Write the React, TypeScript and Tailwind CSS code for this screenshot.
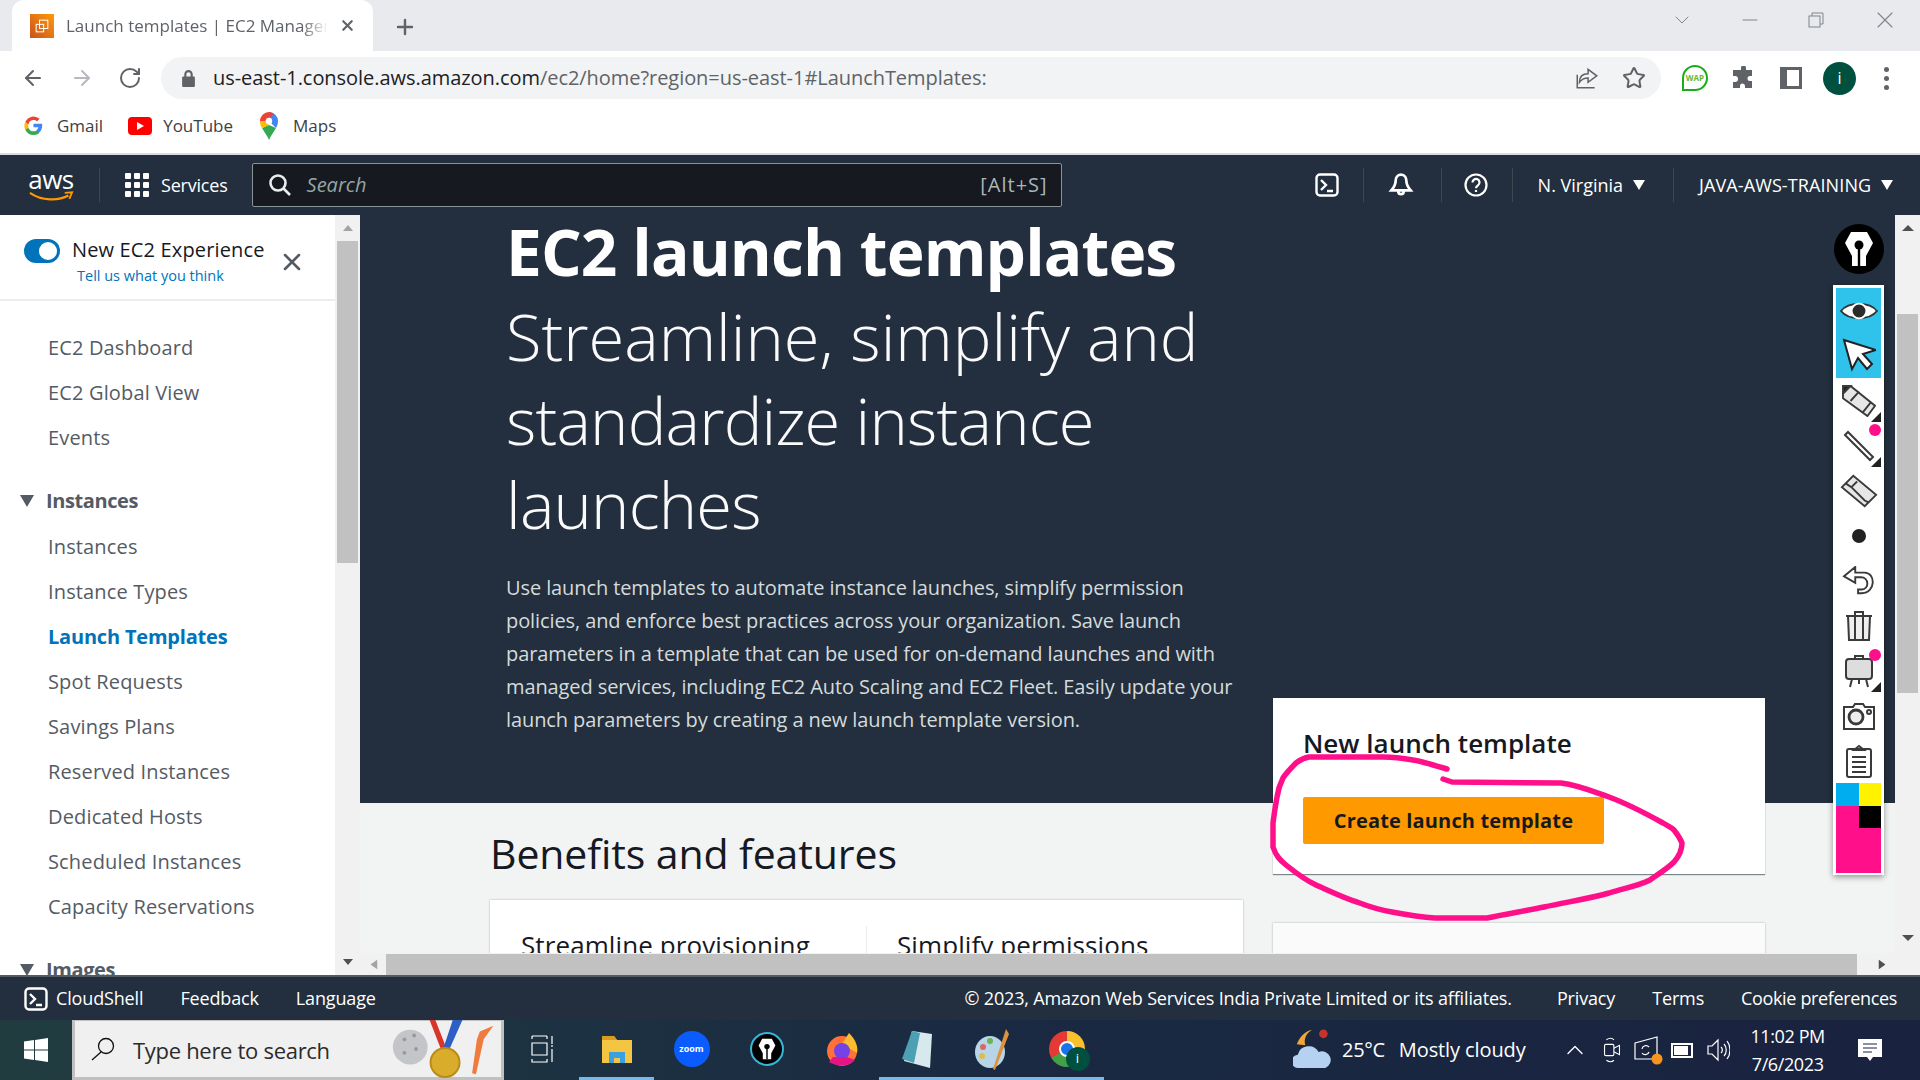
import {
  ArrowLeft,
  ArrowRight,
  ChevronDown,
  ChevronUp,
  Minus,
  Plus,
  RotateCw,
  Star,
  X,
} from "lucide-react";

const emberFont = "font-['Open_Sans',sans-serif]";

const navGroups = [
  { items: ["EC2 Dashboard", "EC2 Global View", "Events"] },
  {
    title: "Instances",
    items: [
      "Instances",
      "Instance Types",
      "Launch Templates",
      "Spot Requests",
      "Savings Plans",
      "Reserved Instances",
      "Dedicated Hosts",
      "Scheduled Instances",
      "Capacity Reservations",
    ],
  },
  { title: "Images", items: [] },
];

const inkPath =
  "M1447 769 C1430 764 1420 761 1413 760 C1402 758 1392 757 1383 757 L1309 757 C1303 758 1300 760 1296 763 C1290 769 1286 773 1283 778 C1279 786 1278 790 1277 797 C1275 808 1274 815 1273 823 L1273 847 C1276 856 1280 860 1286 865 C1296 873 1305 880 1316 885 C1332 892 1344 898 1357 902 C1370 907 1380 910 1392 912 C1408 915 1420 917 1435 918 L1487 918 C1506 914 1525 911 1544 907 C1566 902 1588 899 1609 893 C1625 888 1638 886 1650 880 C1660 873 1668 868 1674 862 C1680 855 1682 849 1682 843 C1680 838 1678 835 1674 830 C1671 827 1668 826 1663 823 C1645 813 1628 804 1609 797 C1592 791 1578 785 1561 783 L1452 782 L1443 779";

function Tri({ className }: { className: string }) {
  return (
    <svg viewBox="0 0 12 10" className={className} fill="currentColor" preserveAspectRatio="none">
      <path d="M0 0h12L6 10z" />
    </svg>
  );
}

function NibIcon({ className }: { className: string }) {
  return (
    <svg viewBox="0 0 30 36" className={className}>
      <path fill="white" d="M7 1h16l6 11-7 13v10H8V25L1 12z" />
      <circle cx="15" cy="14" r="4.500" fill="black" />
      <rect x="13.800" y="14" width="2.400" height="21" fill="black" />
    </svg>
  );
}

function TabBar() {
  return (
    <div className="flex h-[51px] items-end bg-[#e8eaed] pl-3 text-[#5f6368]">
      <div className="flex h-[51px] w-[361px] items-center rounded-t-xl bg-white pl-[18px]">
        <div className="flex h-6 w-6 shrink-0 items-center justify-center bg-gradient-to-tr from-[#c8511b] to-[#ff9900]">
          <svg viewBox="0 0 24 24" className="h-5 w-5" fill="none" stroke="white" strokeWidth="1.2">
            <rect x="9" y="5" width="10" height="10" />
            <rect x="5" y="10" width="9" height="9" />
          </svg>
        </div>
        <span className="ml-3 w-[262px] overflow-hidden whitespace-nowrap text-[17px] text-[#5f6368] [mask-image:linear-gradient(to_right,black_90%,transparent)]">
          Launch templates | EC2 Management Console
        </span>
        <X className="ml-[11px] h-[17px] w-[17px] text-[#5f6368]" strokeWidth={3} />
      </div>
      <Plus className="mb-3 ml-[20px] h-[24px] w-[24px] text-[#5f6368]" strokeWidth={2.4} />
      <div className="mb-[17px] ml-auto flex items-center text-[#80868b]">
        <ChevronDown className="h-6 w-6" strokeWidth={1} />
        <Minus className="ml-11 h-6 w-6" strokeWidth={1} />
        <svg viewBox="0 0 16 16" className="ml-[46px] h-4 w-4" fill="none" stroke="currentColor">
          <rect x="1" y="4" width="11" height="11" />
          <path d="M4 4V1h11v11h-3" />
        </svg>
        <X className="ml-[47px] mr-[21px] h-7 w-7" strokeWidth={1} />
      </div>
    </div>
  );
}

function Toolbar() {
  return (
    <div className="flex h-[51px] items-center bg-white pl-[21px] pt-[3px] text-[#5f6368]">
      <ArrowLeft className="h-6 w-6" strokeWidth={2} />
      <ArrowRight className="ml-[25px] h-6 w-6 text-[#b6b9bd]" strokeWidth={2} />
      <RotateCw className="ml-6 h-6 w-6" strokeWidth={2} />
      <div className="ml-[19px] flex h-[42px] w-[1500px] items-center rounded-full bg-[#f1f3f4] pl-[21px]">
        <svg viewBox="0 0 12 16" className="h-[17px] w-[13px]" fill="#5f6368">
          <path d="M1 6h1V4a4 4 0 0 1 8 0v2h1a1 1 0 0 1 1 1v8a1 1 0 0 1-1 1H1a1 1 0 0 1-1-1V7a1 1 0 0 1 1-1zm3 0h4V4a2 2 0 0 0-4 0z" />
        </svg>
        <span className="ml-[18px] text-[20px] tracking-[-0.05px] text-[#202124]">
          us-east-1.console.aws.amazon.com<span className="text-[#5f6368]">/ec2/home?region=us-east-1#LaunchTemplates:</span>
        </span>
        <svg viewBox="0 0 24 24" className="ml-auto h-[26px] w-[26px]" fill="none" stroke="#5f6368" strokeWidth="1.4">
          <path d="M3 9v12h16M13 4l8 6-8 6v-4c-4 0-6 1-8 4 0-5 3-8 8-8z" />
        </svg>
        <Star className="ml-[22px] mr-[15px] h-6 w-6 text-[#5f6368]" strokeWidth={2} />
      </div>
      <div className="ml-[21px] flex h-[26px] w-[26px] items-center justify-center rounded-full rounded-bl-[3px] border-2 border-[#1aad19] text-[8px] font-bold text-[#6cb52d]">
        WAP
      </div>
      <svg viewBox="0 0 24 24" className="ml-[23px] h-6 w-6" fill="#5f6368">
        <path d="M10 2a2.500 2.500 0 0 1 5 0v2h6v6h-2a2.500 2.500 0 0 0 0 5h2v7h-7v-2a2.500 2.500 0 0 0-5 0v2H2v-6h2a2.500 2.500 0 0 0 0-6H2V4h8z" />
      </svg>
      <div className="ml-[25px] flex h-[22px] w-[22px] justify-end bg-[#5f6368] p-[3px]">
        <div className="h-full w-[12px] bg-white" />
      </div>
      <div className="ml-[21px] flex h-[33px] w-[33px] items-center justify-center rounded-full bg-[#00503f] text-[16px] text-white">
        i
      </div>
      <div className="ml-[28px] flex flex-col gap-[4px]">
        <span className="h-[5px] w-[5px] rounded-full bg-[#5f6368]" />
        <span className="h-[5px] w-[5px] rounded-full bg-[#5f6368]" />
        <span className="h-[5px] w-[5px] rounded-full bg-[#5f6368]" />
      </div>
    </div>
  );
}

function Bookmarks() {
  return (
    <div className="flex h-[53px] items-center border-b-2 border-[#dadce0] bg-white pb-[4px] pl-6 text-[17px] text-[#3c4043]">
      <svg viewBox="0 0 24 24" className="h-[19px] w-[19px]">
        <path fill="#4285f4" d="M23 12c0-.8-.1-1.600-.2-2.300H12v4.400h6.200a5.300 5.300 0 0 1-2.300 3.500v2.900h3.700c2.200-2 3.400-5 3.400-8.500z" />
        <path fill="#34a853" d="M12 24c3.100 0 5.700-1 7.600-2.800l-3.700-2.900c-1 .7-2.400 1.100-3.900 1.100-3 0-5.500-2-6.400-4.700H1.800v3A11.500 11.500 0 0 0 12 24z" />
        <path fill="#fbbc05" d="M5.600 14.700a7 7 0 0 1 0-4.400v-3H1.800a11.500 11.500 0 0 0 0 10.400z" />
        <path fill="#ea4335" d="M12 5.200c1.700 0 3.200.6 4.400 1.700l3.300-3.300A11.500 11.500 0 0 0 1.800 7.300l3.800 3C6.500 7.200 9 5.200 12 5.200z" />
      </svg>
      <span className="ml-[14px]">Gmail</span>
      <div className="ml-[25px] flex h-[18px] w-6 items-center justify-center rounded bg-[#ff0000]">
        <svg viewBox="0 0 10 10" className="h-[10px] w-[10px]" fill="white">
          <path d="M2 1l7 4-7 4z" />
        </svg>
      </div>
      <span className="ml-[11px]">YouTube</span>
      <svg viewBox="0 0 18 28" className="ml-[27px] h-[28px] w-[18px]">
        <path fill="#34a853" d="M9 28C7 23 4 20 2 16l7-3 7 3c-2 4-5 7-7 12z" />
        <path fill="#fbbc05" d="M2 16C.7 14 0 12 0 9l5-1 4 5z" />
        <path fill="#4285f4" d="M9 0a9 9 0 0 1 9 9c0 3-1 5-2 7L9 9z" />
        <path fill="#ea4335" d="M0 9a9 9 0 0 1 9-9c2 0 4 1 5 2L5 9z" />
        <circle cx="9" cy="9" r="3.200" fill="white" />
      </svg>
      <span className="ml-[15px]">Maps</span>
    </div>
  );
}

function ShellIcon({ className }: { className: string }) {
  return (
    <svg viewBox="0 0 24 24" className={className} fill="none" stroke="white" strokeWidth="2.400">
      <rect x="1.500" y="1.500" width="21" height="21" rx="3.500" />
      <path d="M6 7l5 5-5 5M12 18h6" />
    </svg>
  );
}

function Divider() {
  return <div className="h-[34px] w-px bg-[#414750]" />;
}

function TopNav() {
  return (
    <div className={`flex h-[60px] items-center bg-[#232f3e] text-white ${emberFont}`}>
      <div className="ml-[27px] flex w-[48px] flex-col items-center">
        <span className="h-[22px] text-[26px] leading-[20px] tracking-[-0.5px]">aws</span>
        <svg viewBox="0 0 48 12" className="h-[11px] w-[48px]" fill="none">
          <path d="M1 2c13 9 31 9 42 3" stroke="#ff9900" strokeWidth="2.400" />
          <path d="M39 2l8-.5-3 7" stroke="#ff9900" strokeWidth="2" />
        </svg>
      </div>
      <div className="ml-[24px] h-[34px] w-px bg-[#414750]" />
      <div className="ml-[25px] grid h-6 w-6 grid-cols-3 gap-[3px]">
        {Array.from({ length: 9 }).map((_, i) => (
          <span key={i} className="rounded-[1px] bg-white" />
        ))}
      </div>
      <span className="ml-3 text-[18px] tracking-[-0.2px]">Services</span>
      <div className="ml-[24px] flex h-[44px] w-[810px] items-center rounded-[2px] border border-[#879596] bg-[#16191f] pl-[15px] pr-[13px]">
        <svg viewBox="0 0 24 24" className="h-[24px] w-[24px]" fill="none" stroke="#eaeded" strokeWidth="2.600">
          <circle cx="10" cy="10" r="7.500" />
          <path d="M15.500 15.500L22 22" />
        </svg>
        <span className="ml-[15px] text-[20px] italic text-[#95a5a6]">Search</span>
        <span className="ml-auto text-[20px] tracking-[1px] text-[#aab7b8]">[Alt+S]</span>
      </div>
      <ShellIcon className="ml-[253px] h-[24px] w-[24px]" />
      <div className="ml-6">
        <Divider />
      </div>
      <svg viewBox="0 0 24 24" className="ml-[24px] h-[26px] w-[26px]" fill="none" stroke="white" strokeWidth="2.500">
        <path d="M12 2.500c-3.500 0-5 3-5 6 0 4-2.500 6.500-4 8.500h18c-1.500-2-4-4.500-4-8.500 0-3-1.500-6-5-6zM9.500 18a2.500 2.500 0 0 0 5 0" />
      </svg>
      <div className="ml-[27px]">
        <Divider />
      </div>
      <svg viewBox="0 0 24 24" className="ml-[22px] h-[24px] w-[24px]" fill="none" stroke="white" strokeWidth="2.200">
        <circle cx="12" cy="12" r="10.500" />
        <path d="M8.500 9.500a3.500 3.500 0 1 1 5.500 2.800c-1.300.9-2 1.500-2 3M12 17v2" />
      </svg>
      <div className="ml-6">
        <Divider />
      </div>
      <span className="ml-[25px] text-[18px]">N. Virginia</span>
      <Tri className="ml-[10px] h-[10px] w-[12px]" />
      <div className="ml-[28px]">
        <Divider />
      </div>
      <span className="ml-[25px] text-[18px] tracking-[0.1px]">JAVA-AWS-TRAINING</span>
      <Tri className="ml-[10px] h-[10px] w-[12px]" />
    </div>
  );
}

function Sidebar() {
  return (
    <div className={`flex w-[360px] shrink-0 bg-white ${emberFont}`}>
      <div className="w-[335px] overflow-hidden">
        <div className="flex h-[86px] border-b-2 border-[#eaeded] pl-6 pt-[23px]">
          <div className="mt-px flex h-6 w-9 items-center justify-end rounded-full bg-[#0073bb] pr-[3px]">
            <span className="h-[18px] w-[18px] rounded-full bg-white" />
          </div>
          <div className="ml-[12px] w-[197px]">
            <div className="whitespace-nowrap text-[20px] leading-6 tracking-[0.15px] text-[#16191f]">New EC2 Experience</div>
            <div className="ml-[5px] mt-[4px] text-[14.500px] leading-5 text-[#0073bb]">Tell us what you think</div>
          </div>
          <X className="ml-[9px] mt-[10px] h-7 w-7 text-[#545b64]" strokeWidth={2.2} />
        </div>
        <div className="pt-6">
          {navGroups.map((group, g) => (
            <div key={g} className={g > 0 ? "mt-[18px]" : ""}>
              {group.title && (
                <div className="flex h-[46px] items-center pl-5 text-[20px] font-bold tracking-[-0.4px] text-[#545b64]">
                  <Tri className="mr-[12px] h-3 w-[14px] text-[#545b64]" />
                  {group.title}
                </div>
              )}
              {group.items.map((item) => (
                <div
                  key={item}
                  className={`flex h-[45px] items-center pl-12 text-[20px] ${
                    item === "Launch Templates" ? "font-bold tracking-[-0.2px] text-[#0073bb]" : "tracking-[0.15px] text-[#545b64]"
                  }`}
                >
                  {item}
                </div>
              ))}
            </div>
          ))}
        </div>
      </div>
      <div className="flex w-[25px] flex-col items-center bg-[#f1f1f1] pt-[10px]">
        <Tri className="h-[6px] w-[10px] rotate-180 text-[#a3a3a3]" />
        <div className="mt-[10px] h-[322px] w-[21px] bg-[#c1c1c1]" />
        <Tri className="mt-auto mb-[10px] h-[6px] w-[10px] text-[#505050]" />
      </div>
    </div>
  );
}

function Hero() {
  return (
    <div className={`flex h-[588px] shrink-0 flex-col bg-[#232f3e] pl-[146px] text-white ${emberFont}`}>
      <h1 className="-mt-[5px] text-[64px] font-bold leading-[84px] tracking-[-0.9px]">EC2 launch templates</h1>
      <p className="text-[65px] font-light leading-[84px] tracking-[-0.8px] text-[#fafafa]">
        <span className="tracking-[0px]">Streamline, simplify and</span>
        <br />
        standardize instance
        <br />
        launches
      </p>
      <p className="mt-[25px] text-[20px] leading-[33px] tracking-[-0.1px] text-[#d5dbdb]">
        Use launch templates to automate instance launches, simplify permission
        <br />
        policies, and enforce best practices across your organization. Save launch
        <br />
        parameters in a template that can be used for on-demand launches and with
        <br />
        managed services, including EC2 Auto Scaling and EC2 Fleet. Easily update your
        <br />
        launch parameters by creating a new launch template version.
      </p>
    </div>
  );
}

function Lower() {
  return (
    <div className={`flex h-[150px] overflow-hidden bg-[#f2f3f3] ${emberFont}`}>
      <div className="ml-[130px] w-[753px]">
        <h2 className="mt-[25px] text-[41px] leading-[50px] tracking-[-0.1px] text-[#16191f]">Benefits and features</h2>
        <div className="mt-[22px] flex h-[80px] bg-white pl-[31px] pt-[26px] shadow-[0_0_2px_rgba(0,28,36,0.3)]">
          <span className="w-[346px] border-r border-[#eaeded] text-[26px] tracking-[0.1px] text-[#16191f]">Streamline provisioning</span>
          <span className="pl-[30px] text-[26px] tracking-[0.1px] text-[#16191f]">Simplify permissions</span>
        </div>
      </div>
      <div className="ml-[30px] w-[492px]">
        <div className="mt-[120px] h-[40px] bg-[#fafafa] shadow-[0_0_2px_rgba(0,28,36,0.3)]" />
      </div>
    </div>
  );
}

function LaunchCard() {
  return (
    <div className={`absolute left-[913px] top-[483px] flex h-[176px] w-[492px] flex-col bg-white pl-[30px] pt-[26px] shadow-[0_1px_1px_rgba(0,28,36,0.5)] ${emberFont}`}>
      <h3 className="whitespace-nowrap text-[26px] font-semibold leading-[38px] text-[#16191f]">New launch template</h3>
      <button className="mt-[35px] h-[47px] w-[301px] rounded-[2px] bg-[#ff9900] text-[20px] font-bold tracking-[0.15px] text-[#16191f]">
        Create launch template
      </button>
    </div>
  );
}

function HScroll() {
  return (
    <div className="flex h-[22px] shrink-0 items-center bg-[#f1f1f1]">
      <Tri className="ml-[9px] h-[7px] w-[10px] rotate-90 text-[#a3a3a3]" />
      <div className="ml-[7px] h-[21px] w-[1471px] shrink-0 bg-[#c1c1c1]" />
      <Tri className="ml-[20px] h-[7px] w-[10px] -rotate-90 text-[#505050]" />
    </div>
  );
}

function InkButton({ children, badge, corner, active }: { children: React.ReactNode; badge?: boolean; corner?: boolean; active?: boolean }) {
  return (
    <div className={`relative flex h-[45px] w-[45px] items-center justify-center ${active ? "bg-[#2fc3eb]" : ""}`}>
      {children}
      {badge && <span className="absolute right-0 top-[1px] h-3 w-3 rounded-full bg-[#ff0f8a]" />}
      {corner && (
        <svg viewBox="0 0 10 10" className="absolute bottom-[1px] right-0 h-[10px] w-[10px]">
          <path d="M10 0v10H0z" fill="#222" />
        </svg>
      )}
    </div>
  );
}

const inkStroke = { fill: "none", stroke: "#3a3a3a", strokeWidth: 2 };

function InkToolbar() {
  return (
    <div className="absolute right-[36px] top-[9px] flex w-[51px] flex-col items-center">
      <div className="flex h-[50px] w-[50px] items-center justify-center rounded-full bg-black">
        <NibIcon className="h-[36px] w-[30px]" />
      </div>
      <div className="mt-[11px] flex h-[590px] w-[51px] flex-col items-center bg-white pt-[3px] shadow-[0_2px_6px_rgba(0,0,0,0.4)]">
        <InkButton active>
          <svg viewBox="0 0 36 24" className="h-[26px] w-[38px]" fill="white" stroke="#333" strokeWidth="1.800">
            <path d="M1 12C8 3 28 3 35 12 28 21 8 21 1 12z" />
            <circle cx="18" cy="12" r="7" fill="#2b2b2b" stroke="#fff" />
          </svg>
        </InkButton>
        <InkButton active>
          <svg viewBox="0 0 34 36" className="h-[36px] w-[34px]" fill="white" stroke="#222" strokeWidth="2">
            <path d="M2 2l32 10-13 4 9 10-5 5-9-11-6 11z" />
          </svg>
        </InkButton>
        <InkButton corner>
          <svg viewBox="0 0 36 34" className="h-[32px] w-[34px]" {...inkStroke}>
            <path d="M1 9l8-8 26 21-8 11L1 14z" fill="#e6e6e6" />
            <path d="M1 1h8L1 9z" fill="#222" />
            <path d="M9 17l9-10M22 29l9-11" />
          </svg>
        </InkButton>
        <InkButton corner badge>
          <svg viewBox="0 0 32 32" className="h-[32px] w-[32px]" {...inkStroke}>
            <path d="M2 5l3-3 25 25-3 3z" />
          </svg>
        </InkButton>
        <InkButton>
          <svg viewBox="0 0 40 36" className="h-[36px] w-[38px]" {...inkStroke}>
            <path d="M2 14L14 2l24 20-12 12z" fill="#e6e6e6" />
            <path d="M6 10l6 4 14 14 4 2M12 14l6-6" />
          </svg>
        </InkButton>
        <InkButton>
          <span className="h-[14px] w-[14px] rounded-full bg-[#222]" />
        </InkButton>
        <InkButton>
          <svg viewBox="0 0 34 32" className="h-[30px] w-[34px]" {...inkStroke}>
            <path d="M1 11L13 1v6h10c12 0 12 22-3 22h-4v-4h4c8 0 8-13-1-13H13v6z" fill="white" />
          </svg>
        </InkButton>
        <InkButton>
          <svg viewBox="0 0 28 32" className="h-[32px] w-[28px]" {...inkStroke}>
            <path d="M3 6h22l-1 24H4z" fill="#eee" />
            <path d="M1 6h26M10 6V2h8v4M10 6v24M18 6v24" />
          </svg>
        </InkButton>
        <InkButton corner badge>
          <svg viewBox="0 0 30 34" className="h-[34px] w-[30px]" {...inkStroke}>
            <rect x="2" y="5" width="26" height="20" rx="3" fill="#ddd" />
            <path d="M11 5V2h8v3M8 25l-2 8M22 25l2 8M15 25v5" />
          </svg>
        </InkButton>
        <InkButton>
          <svg viewBox="0 0 34 28" className="h-[28px] w-[34px]" {...inkStroke}>
            <path d="M2 5h9l2-3h8l2 3h9v22H2z" fill="white" />
            <circle cx="14" cy="15" r="7" fill="#eee" strokeWidth="2.800" />
            <circle cx="27" cy="10" r="2" />
          </svg>
        </InkButton>
        <InkButton>
          <svg viewBox="0 0 28 34" className="h-[34px] w-[28px]" {...inkStroke}>
            <rect x="2" y="5" width="24" height="28" rx="2" fill="white" />
            <path d="M9 6l5-4 5 4zM7 13h14M7 18h14M7 23h14M7 28h14" />
          </svg>
        </InkButton>
        <div className="grid h-[90px] w-[45px] grid-cols-2 grid-rows-[23px_22px_45px]">
          <div className="bg-[#00aeef]" />
          <div className="bg-[#fff200]" />
          <div className="bg-[#ff0f8a]" />
          <div className="bg-black" />
          <div className="col-span-2 bg-[#ff0f8a]" />
        </div>
      </div>
    </div>
  );
}

function Workspace() {
  return (
    <div className="flex h-[760px] overflow-hidden">
      <Sidebar />
      <div className="relative flex min-w-0 flex-1">
        <div className="flex min-w-0 flex-1 flex-col">
          <div className="h-[738px] shrink-0 overflow-hidden">
            <Hero />
            <Lower />
          </div>
          <HScroll />
        </div>
        <div className="flex w-[25px] shrink-0 flex-col items-center bg-[#f1f1f1] pt-[10px]">
          <Tri className="h-[6px] w-[12px] rotate-180 text-[#505050]" />
          <div className="mt-[83px] h-[379px] w-[21px] bg-[#c1c1c1]" />
          <Tri className="mb-[34px] mt-auto h-[6px] w-[12px] text-[#505050]" />
        </div>
        <LaunchCard />
        <InkToolbar />
      </div>
    </div>
  );
}

function Footer() {
  return (
    <div className={`flex h-[45px] items-center border-t-2 border-[#545b64] bg-[#232f3e] pl-6 pr-[23px] text-[18px] tracking-[-0.15px] text-white ${emberFont}`}>
      <ShellIcon className="h-[24px] w-[24px]" />
      <span className="ml-[8px]">CloudShell</span>
      <span className="ml-[37px]">Feedback</span>
      <span className="ml-[37px]">Language</span>
      <span className="ml-auto">© 2023, Amazon Web Services India Private Limited or its affiliates.</span>
      <span className="ml-[45px]">Privacy</span>
      <span className="ml-[37px]">Terms</span>
      <span className="ml-[37px] tracking-[-0.35px]">Cookie preferences</span>
    </div>
  );
}

function TaskCell({ children, active }: { children: React.ReactNode; active?: boolean }) {
  return (
    <div className={`flex h-full w-[75px] items-center justify-center border-b-[3px] ${active ? "border-[#76b9ed]" : "border-transparent"}`}>
      {children}
    </div>
  );
}

function Taskbar() {
  return (
    <div className="flex h-[60px] items-center bg-gradient-to-r from-[#213c3f] via-[#1a2a42] to-[#19223f] font-['Open_Sans',sans-serif] text-white">
      <div className="flex h-full w-[72px] items-center justify-center">
        <svg viewBox="0 0 24 24" className="h-6 w-6" fill="white">
          <path d="M0 3.500l10-1.400v9.400H0zM11 2l13-2v11.500H11zM0 12.500h10v9.400L0 20.500zM11 12.500h13V24l-13-2z" />
        </svg>
      </div>
      <div className="flex h-full w-[432px] items-center border-[3px] border-b-[3px] border-[#c0c0c0] border-t-[1px] bg-[#f0f0f0] pl-[16px]">
        <svg viewBox="0 0 24 24" className="h-[28px] w-[24px]" fill="none" stroke="#111" strokeWidth="1.300">
          <circle cx="15" cy="9" r="7.500" />
          <path d="M10 15L1 23" />
        </svg>
        <span className="ml-[18px] pt-[2px] text-[22px] tracking-[-0.3px] text-[#2b2b2b]">Type here to search</span>
        <svg viewBox="0 0 110 60" className="ml-auto h-[58px] w-[110px] shrink-0">
          <circle cx="18" cy="28" r="18" fill="#c3c5c9" />
          <circle cx="12" cy="20" r="2" fill="#999" />
          <circle cx="22" cy="16" r="2" fill="#999" />
          <circle cx="24" cy="30" r="2" fill="#999" />
          <circle cx="12" cy="34" r="2" fill="#999" />
          <path d="M44 0l14 36h-6L38 0z" fill="#d8342b" />
          <path d="M72 0L56 36h-6L62 0z" fill="#2d5fc4" />
          <circle cx="54" cy="44" r="15" fill="#d9ac2b" stroke="#b98a17" strokeWidth="2" />
          <path d="M90 12l14-6-10 14-8 36-4-1 5-35z" fill="#f07b3f" />
        </svg>
      </div>
      <TaskCell>
        <svg viewBox="0 0 24 28" className="h-[28px] w-[24px]" fill="none" stroke="white" strokeWidth="1.200">
          <path d="M2 1h15M2 4V1M17 4V1M2 8h15v12H2zM2 24v3h15v-3M22 1v8M22 10v2M22 14v13" />
        </svg>
      </TaskCell>
      <TaskCell active>
        <svg viewBox="0 0 32 32" className="h-[32px] w-[32px]">
          <path d="M1 3h12l3 4h15v23H1z" fill="#f4c542" />
          <path d="M1 3h12l3 4H1z" fill="#d99c1e" />
          <path d="M8 30V19h16v11h-5v-5h-6v5z" fill="#3aa0e0" />
        </svg>
      </TaskCell>
      <TaskCell>
        <div className="flex h-9 w-9 items-center justify-center rounded-full bg-[#0b5cff] text-[9px] font-bold">zoom</div>
      </TaskCell>
      <TaskCell>
        <div className="flex h-[34px] w-[34px] items-center justify-center rounded-full border-2 border-[#36b7d7] bg-black">
          <NibIcon className="h-[22px] w-[18px]" />
        </div>
      </TaskCell>
      <TaskCell>
        <svg viewBox="0 0 34 34" className="h-[34px] w-[34px]">
          <circle cx="17" cy="19" r="15" fill="#ff7139" />
          <path d="M24 1c8 8 9 15 8 20L17 12z" fill="#ffbd2e" />
          <circle cx="17" cy="19" r="8" fill="#7542e5" />
          <path d="M4 30c8 5 20 5 26-2l-8-3H8z" fill="#e31587" />
        </svg>
      </TaskCell>
      <TaskCell active>
        <svg viewBox="0 0 34 40" className="h-[40px] w-[34px]">
          <path d="M12 2l20 3-2 34-26-7z" fill="#d7e9ec" />
          <path d="M12 2L2 30l12 4 6-30z" fill="#4d9fb3" />
        </svg>
      </TaskCell>
      <TaskCell active>
        <svg viewBox="0 0 36 44" className="h-[44px] w-[36px]">
          <ellipse cx="16" cy="25" rx="15" ry="16" fill="#b8d5e8" />
          <circle cx="9" cy="20" r="3" fill="#d86a5c" />
          <circle cx="16" cy="14" r="3" fill="#6cb352" />
          <circle cx="8" cy="29" r="3" fill="#e5b84a" />
          <path d="M32 2l3 5-14 36-2-1z" fill="#e0913a" />
        </svg>
      </TaskCell>
      <TaskCell active>
        <div className="relative h-9 w-9 rounded-full bg-[conic-gradient(#fbc02d_0deg_120deg,#43a047_120deg_240deg,#e53935_240deg_360deg)]">
          <div className="absolute left-[10px] top-[10px] h-4 w-4 rounded-full border-2 border-white bg-[#1a73e8]" />
          <div className="absolute -bottom-[4px] -right-[5px] flex h-6 w-6 items-center justify-center rounded-full bg-[#00503f] text-[13px]">i</div>
        </div>
      </TaskCell>
      <svg viewBox="0 0 40 46" className="ml-[189px] h-[46px] w-[38px] shrink-0">
        <path d="M20 2c-6 3-9 10-7 16L4 17c3-7 8-14 16-15z" fill="#f0a63b" />
        <circle cx="32" cy="6" r="4.500" fill="#c8322b" />
        <path d="M6 42a7 7 0 0 1-1-14 12 12 0 0 1 22-3 9 9 0 0 1 7 17z" fill="#b5d2f2" />
      </svg>
      <span className="ml-[11px] text-[20px] tracking-[-0.3px]">25°C</span>
      <span className="ml-[14px] text-[20px] tracking-[-0.1px]">Mostly cloudy</span>
      <ChevronUp className="ml-[35px] h-7 w-7" strokeWidth={1.2} />
      <svg viewBox="0 0 18 30" className="ml-[14px] h-[28px] w-[18px]" fill="none" stroke="white" strokeWidth="1.200">
        <rect x="1" y="9" width="10" height="12" rx="1.500" />
        <path d="M11 13l6-3v10l-6-3M3 4c3-2 6-2 8 0M3 26c3 2 6 2 8 0" />
      </svg>
      <svg viewBox="0 0 30 30" className="ml-[12px] h-[30px] w-[30px]" fill="none" stroke="white" strokeWidth="1.200">
        <path d="M2 8l22-6v22H2z" />
        <path d="M9 14a4 4 0 0 1 7-2M16 17a4 4 0 0 1-7 1" />
        <circle cx="24" cy="24" r="5.500" fill="#f7941d" stroke="none" />
      </svg>
      <div className="ml-[8px] flex h-[15px] w-[22px] items-center border-2 border-white p-[1px]">
        <div className="h-full w-[14px] bg-white" />
      </div>
      <svg viewBox="0 0 24 24" className="ml-[13px] h-[24px] w-[24px]" fill="none" stroke="white" strokeWidth="1.200">
        <path d="M2 8h4l6-6v20l-6-6H2zM15 9a4 4 0 0 1 0 6M18 6c3 3 3 9 0 12M21 3c4 5 4 13 0 18" />
      </svg>
      <div className="ml-[20px] flex w-[76px] flex-col items-center text-[18px] leading-[28px] tracking-[-0.4px]">
        <span>11:02 PM</span>
        <span>7/6/2023</span>
      </div>
      <svg viewBox="0 0 24 24" className="ml-[32px] h-6 w-6" fill="white">
        <path d="M0 1h24v18h-9l-3 4-3-4H0z" />
        <path d="M5 6h14M5 10h14M5 14h9" stroke="#1a2342" strokeWidth="1.200" />
      </svg>
    </div>
  );
}

export default function App() {
  return (
    <div className="relative h-[1080px] w-[1920px] overflow-hidden bg-white font-['Open_Sans',sans-serif]">
      <TabBar />
      <Toolbar />
      <Bookmarks />
      <TopNav />
      <Workspace />
      <Footer />
      <Taskbar />
      <svg viewBox="0 0 1920 1080" className="pointer-events-none absolute left-0 top-0 h-[1080px] w-[1920px]" fill="none">
        <path d={inkPath} stroke="#ff0f8a" strokeWidth="5.500" strokeLinecap="round" strokeLinejoin="round" />
      </svg>
    </div>
  );
}
